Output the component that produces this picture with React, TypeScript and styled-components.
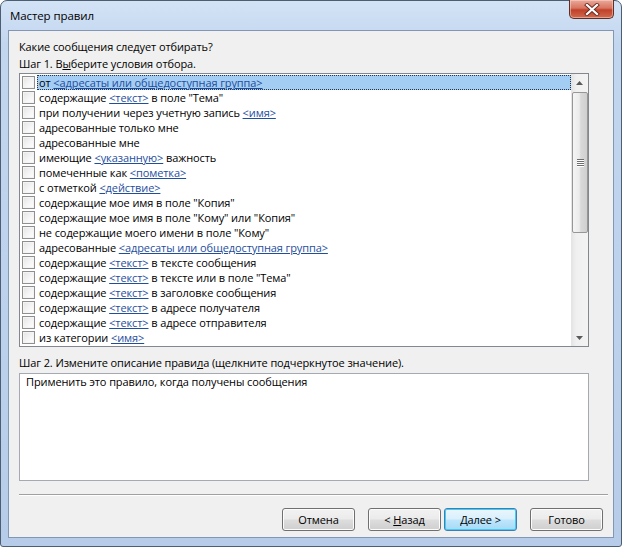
import React from 'react'
import styled, { createGlobalStyle } from 'styled-components'

type Part = string | { link: string }

const conditions: Part[][] = [
  ['от ', { link: '<адресаты или общедоступная группа>' }],
  ['содержащие ', { link: '<текст>' }, ' в поле "Тема"'],
  ['при получении через учетную запись ', { link: '<имя>' }],
  ['адресованные только мне'],
  ['адресованные мне'],
  ['имеющие ', { link: '<указанную>' }, ' важность'],
  ['помеченные как ', { link: '<пометка>' }],
  ['с отметкой ', { link: '<действие>' }],
  ['содержащие мое имя в поле "Копия"'],
  ['содержащие мое имя в поле "Кому" или "Копия"'],
  ['не содержащие моего имени в поле "Кому"'],
  ['адресованные ', { link: '<адресаты или общедоступная группа>' }],
  ['содержащие ', { link: '<текст>' }, ' в тексте сообщения'],
  ['содержащие ', { link: '<текст>' }, ' в тексте или в поле "Тема"'],
  ['содержащие ', { link: '<текст>' }, ' в заголовке сообщения'],
  ['содержащие ', { link: '<текст>' }, ' в адресе получателя'],
  ['содержащие ', { link: '<текст>' }, ' в адресе отправителя'],
  ['из категории ', { link: '<имя>' }],
]

export default function App() {
  return (
    <>
      <GlobalStyle />
      <Window>
        <TitleBar>
          <Title>Мастер правил</Title>
          <CloseButton>
            <svg width="16" height="13" viewBox="0 0 16 13">
              <path d="M3 2 L13 11 M13 2 L3 11" stroke="#6b2b22" strokeWidth="4" strokeLinecap="square" />
              <path d="M3 2 L13 11 M13 2 L3 11" stroke="#ffffff" strokeWidth="2.2" strokeLinecap="square" />
            </svg>
          </CloseButton>
        </TitleBar>

        <Client>
          <Label>Какие сообщения следует отбирать?</Label>
          <Label>
            Шаг 1. В<u>ы</u>берите условия отбора.
          </Label>

          <ListBox>
            <Rows>
              {conditions.map((parts, i) => (
                <Row key={i}>
                  <CheckBox />
                  <RowText $selected={i === 0}>
                    {parts.map((p, j) =>
                      typeof p === 'string' ? <span key={j}>{p}</span> : <Link key={j}>{p.link}</Link>
                    )}
                  </RowText>
                </Row>
              ))}
            </Rows>
            <ScrollBar>
              <ArrowButton>
                <svg width="7" height="4" viewBox="0 0 7 4">
                  <path d="M0 4 L3.5 0 L7 4 Z" fill="#5a5a5a" />
                </svg>
              </ArrowButton>
              <Track>
                <Thumb>
                  <Grip />
                  <Grip />
                  <Grip />
                  <Grip />
                </Thumb>
              </Track>
              <ArrowButton>
                <svg width="7" height="4" viewBox="0 0 7 4">
                  <path d="M0 0 L7 0 L3.5 4 Z" fill="#5a5a5a" />
                </svg>
              </ArrowButton>
            </ScrollBar>
          </ListBox>

          <Step2Label>
            Шаг 2. Измените описание прави<u>л</u>а (щелкните подчеркнутое значение).
          </Step2Label>
          <Description>Применить это правило, когда получены сообщения</Description>

          <Separator />

          <Buttons>
            <Button>Отмена</Button>
            <NavGroup>
              <Button>
                &lt; <u>Н</u>азад
              </Button>
              <Button $default>
                <u>Д</u>алее &gt;
              </Button>
            </NavGroup>
            <Button>Готово</Button>
          </Buttons>
        </Client>
      </Window>
    </>
  )
}

const GlobalStyle = createGlobalStyle`
  body {
    margin: 0;
    background: #ffffff;
    font-family: 'Open Sans', 'Noto Sans', sans-serif;
    font-size: 11px;
    letter-spacing: -0.1px;
  }
`

const Window = styled.div`
  box-sizing: border-box;
  width: 622px;
  height: 547px;
  display: flex;
  flex-direction: column;
  padding: 0 7px 8px 7px;
  border: 1px solid #4d5d72;
  border-radius: 7px 7px 3px 3px;
  background: linear-gradient(180deg, #d3e3f6 0%, #c2d6ef 8%, #bcd1ec 60%, #b6cce8 100%);
`

const TitleBar = styled.div`
  height: 29px;
  display: flex;
  align-items: flex-start;
  justify-content: space-between;
`

const Title = styled.div`
  padding: 7px 0 0 2px;
  color: #000;
  font-size: 11.5px;
  line-height: 15px;
`

const CloseButton = styled.div`
  box-sizing: border-box;
  width: 45px;
  height: 19px;
  margin-top: -1px;
  display: flex;
  align-items: center;
  justify-content: center;
  border: 1px solid #5e2e28;
  border-top: none;
  border-radius: 0 0 5px 5px;
  background: linear-gradient(180deg, #e9a99b 0%, #d8745f 45%, #c1412a 55%, #cf6a4f 100%);
  box-shadow: inset 0 0 0 1px rgba(255, 220, 210, 0.5);
`

const Client = styled.div`
  flex: 1;
  display: flex;
  flex-direction: column;
  padding: 7px 5px 0 10px;
  border: 1px solid #8197b5;
  background: #f0f0f0;
  color: #000;
`

const Label = styled.div`
  line-height: 17px;
  height: 17px;
  white-space: nowrap;

  & u {
    text-decoration: underline;
  }
`

const ListBox = styled.div`
  box-sizing: border-box;
  width: 570px;
  height: 274px;
  margin-top: 1px;
  display: flex;
  border: 1px solid #828790;
  background: #ffffff;
`

const Rows = styled.div`
  flex: 1;
  padding-top: 1px;
  display: flex;
  flex-direction: column;
`

const Row = styled.div`
  height: 15px;
  display: flex;
  align-items: center;
  padding-left: 2px;
`

const CheckBox = styled.div`
  box-sizing: border-box;
  width: 13px;
  height: 13px;
  flex: none;
  border: 1px solid #8e8f8f;
  background: linear-gradient(135deg, #e4e4e4 0%, #f6f6f6 60%, #ffffff 100%);
  box-shadow: inset 0 0 0 1px #f4f4f4;
`

const RowText = styled.div<{ $selected?: boolean }>`
  box-sizing: border-box;
  flex: 1;
  height: 15px;
  margin-left: 2px;
  padding-left: 1px;
  line-height: 13px;
  white-space: nowrap;
  border: 1px dotted ${({ $selected }) => ($selected ? '#1f3550' : 'transparent')};
  background: ${({ $selected }) => ($selected ? '#a4cdf4' : 'transparent')};
`

const Link = styled.span`
  color: #1f4e9e;
  text-decoration: underline;
`

const ScrollBar = styled.div`
  width: 17px;
  flex: none;
  display: flex;
  flex-direction: column;
  background: linear-gradient(90deg, #e3e3e3 0%, #f0f0f0 30%, #f3f3f3 100%);
`

const ArrowButton = styled.div`
  height: 17px;
  flex: none;
  display: flex;
  align-items: center;
  justify-content: center;
`

const Track = styled.div`
  flex: 1;
  display: flex;
  flex-direction: column;
  padding-top: 1px;
`

const Thumb = styled.div`
  box-sizing: border-box;
  height: 141px;
  margin: 0 0 0 1px;
  display: flex;
  flex-direction: column;
  align-items: center;
  justify-content: center;
  gap: 1px;
  border: 1px solid #969696;
  border-radius: 2px;
  background: linear-gradient(90deg, #f5f5f5 0%, #ebebeb 45%, #d9d9d9 55%, #cfcfcf 100%);
`

const Grip = styled.div`
  width: 7px;
  height: 1px;
  background: #6d6d6d;
  box-shadow: 0 1px 0 #ffffff;
`

const Step2Label = styled(Label)`
  margin-top: 7px;
  height: 17px;
`

const Description = styled.div`
  box-sizing: border-box;
  width: 570px;
  height: 108px;
  margin-top: 2px;
  padding: 0 6px;
  line-height: 16px;
  border: 1px solid #a5a9b2;
  background: #ffffff;
`

const Separator = styled.div`
  margin-top: 13px;
  height: 1px;
  background: #a0a0a0;
  border-bottom: 1px solid #ffffff;
`

const Buttons = styled.div`
  margin-top: 12px;
  padding-right: 5px;
  display: flex;
  justify-content: flex-end;
  gap: 13px;
`

const NavGroup = styled.div`
  display: flex;
  gap: 3px;
`

const Button = styled.div<{ $default?: boolean }>`
  box-sizing: border-box;
  width: 73px;
  height: 23px;
  display: flex;
  align-items: center;
  justify-content: center;
  white-space: pre;
  border: 1px solid ${({ $default }) => ($default ? '#3c7fb1' : '#707070')};
  border-radius: 3px;
  color: #000;
  background: ${({ $default }) =>
    $default
      ? 'linear-gradient(180deg, #eaf6fd 0%, #d9f0fc 48%, #bee6fd 52%, #a7d9f5 100%)'
      : 'linear-gradient(180deg, #f2f2f2 0%, #ebebeb 48%, #dddddd 52%, #cfcfcf 100%)'};
  box-shadow: inset 0 0 0 1px ${({ $default }) => ($default ? '#48c9f7' : '#fcfcfc')};
`
